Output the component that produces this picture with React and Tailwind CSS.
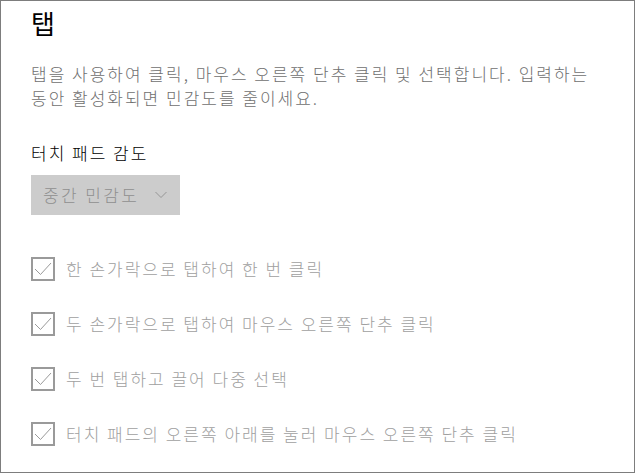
import React from 'react';

const font = { fontFamily: '"Noto Sans CJK KR", "Noto Sans", sans-serif' };

const options = [
  '한 손가락으로 탭하여 한 번 클릭',
  '두 손가락으로 탭하여 마우스 오른쪽 단추 클릭',
  '두 번 탭하고 끌어 다중 선택',
  '터치 패드의 오른쪽 아래를 눌러 마우스 오른쪽 단추 클릭',
];

const CheckRow = ({ label }) => (
  <div className="flex items-center h-[24px] mb-[31px]">
    <div className="w-[24px] h-[24px] border-2 border-[#9a9a9a] flex items-center justify-center shrink-0">
      <svg width="20" height="20" viewBox="0 0 20 20" fill="none">
        <polyline points="2,10 7.5,15.5 18,4" stroke="#9a9a9a" strokeWidth="1" />
      </svg>
    </div>
    <span className="ml-[11px] text-[17px] leading-[24px] tracking-[2px] font-light text-[#a0a0a0]">{label}</span>
  </div>
);

export default function App() {
  return (
    <div className="w-[635px] h-[473px] border border-[#7d7d7d] bg-white pl-[30px] pt-[6px] overflow-hidden" style={font}>
      <h1 className="text-[26px] leading-[32px] font-normal text-black">탭</h1>

      <p className="mt-[23px] max-w-[580px] text-[17px] leading-[24px] tracking-[2px] font-light text-[#6f6f6f]">
        탭을 사용하여 클릭, 마우스 오른쪽 단추 클릭 및 선택합니다. 입력하는 동안 활성화되면 민감도를 줄이세요.
      </p>

      <div className="mt-[31px] text-[17px] leading-[24px] tracking-[2px] font-light text-black">터치 패드 감도</div>

      <div className="mt-[10px] w-[149px] h-[40px] bg-[#cccccc] flex items-center pl-[12px] text-[17px] tracking-[2.4px] font-light text-[#8f8f8f]">
        <span>중간 민감도</span>
        <svg className="ml-[16px]" width="12" height="8" viewBox="0 0 12 8" fill="none">
          <polyline points="0.5,1 6,6.5 11.5,1" stroke="#959595" strokeWidth="1" />
        </svg>
      </div>

      <div className="mt-[42px]">
        {options.map((o) => (
          <CheckRow key={o} label={o} />
        ))}
      </div>
    </div>
  );
}
